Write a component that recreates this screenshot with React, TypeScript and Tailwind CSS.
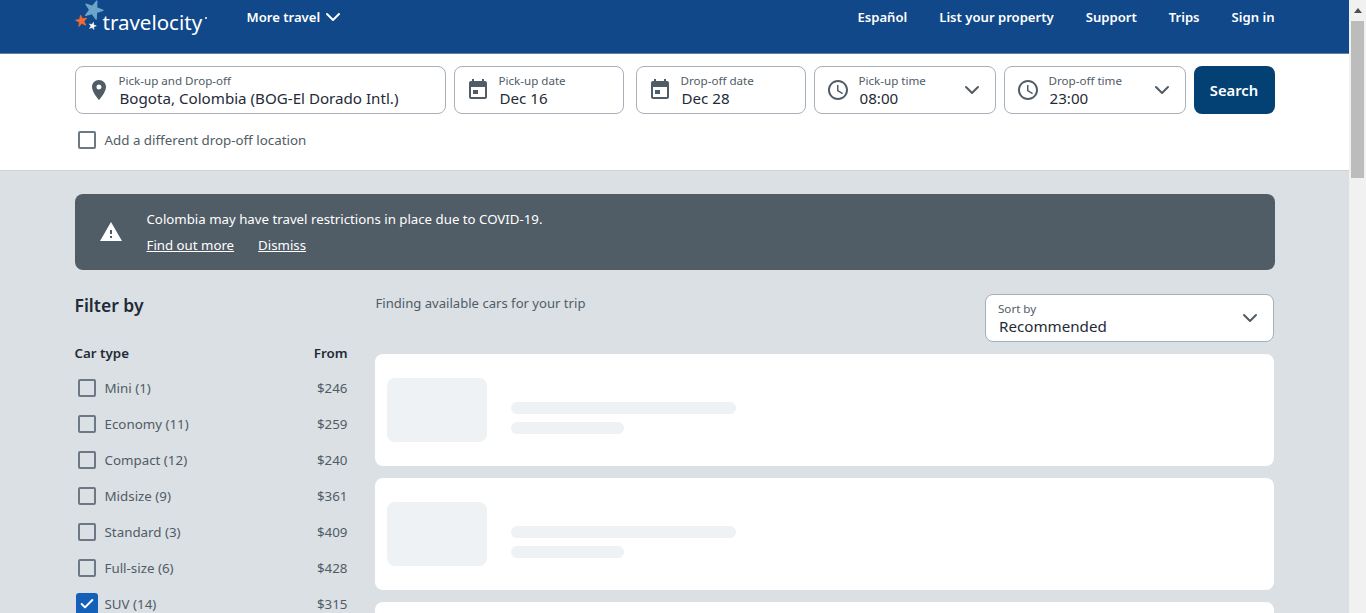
import { ChevronDown, Check } from 'lucide-react';

const filters = [
  { label: 'Mini (1)', price: '$246' },
  { label: 'Economy (11)', price: '$259' },
  { label: 'Compact (12)', price: '$240' },
  { label: 'Midsize (9)', price: '$361' },
  { label: 'Standard (3)', price: '$409' },
  { label: 'Full-size (6)', price: '$428' },
  { label: 'SUV (14)', price: '$315', checked: true },
];

function Star({ cx, cy, r, fill, rot }: { cx: number; cy: number; r: number; fill: string; rot: number }) {
  const pts = Array.from({ length: 10 }, (_, i) => {
    const rad = i % 2 === 0 ? r : r * 0.4;
    const a = ((rot + i * 36) * Math.PI) / 180;
    return `${cx + rad * Math.sin(a)},${cy - rad * Math.cos(a)}`;
  }).join(' ');
  return <polygon points={pts} fill={fill} stroke={fill} strokeWidth={r * 0.14} strokeLinejoin="round" />;
}

function Logo() {
  return (
    <div className="relative h-[34px] w-[134px]">
      <svg width="32" height="34" viewBox="0 0 32 34" className="absolute left-0 top-0">
        <Star cx={18.5} cy={10} r={9.5} fill="#6ba5cb" rot={20} />
        <Star cx={6.5} cy={21} r={6} fill="#f26b32" rot={-10} />
        <Star cx={17.5} cy={26} r={3.8} fill="#ffffff" rot={15} />
      </svg>
      <span className="absolute left-[28px] top-[7px] text-[20.5px] font-normal leading-[30px] text-white">
        travelocity
      </span>
      <span className="absolute left-[130px] top-[17px] h-[2px] w-[2px] rounded-full bg-white" />
    </div>
  );
}

function Pin() {
  return (
    <svg width="24" height="24" viewBox="0 0 24 24" fill="#505c66" className="-mr-px">
      <path d="M12 2C8.13 2 5 5.13 5 9c0 5.25 7 13 7 13s7-7.75 7-13c0-3.87-3.13-7-7-7zm0 9.5a2.5 2.5 0 1 1 0-5 2.5 2.5 0 0 1 0 5z" />
    </svg>
  );
}

function CalendarIcon() {
  return (
    <svg width="24" height="24" viewBox="0 0 24 24" fill="#505c66">
      <path d="M19 3h-1V1h-2v2H8V1H6v2H5c-1.1 0-2 .9-2 2v14c0 1.1.9 2 2 2h14c1.1 0 2-.9 2-2V5c0-1.1-.9-2-2-2zm0 16H5V9h14v10zM7 12h5v4H7z" />
    </svg>
  );
}

function ClockIcon() {
  return (
    <svg width="24" height="24" viewBox="0 0 24 24" fill="#505c66">
      <path d="M11.99 2C6.47 2 2 6.48 2 12s4.47 10 9.99 10C17.52 22 22 17.52 22 12S17.52 2 11.99 2zM12 20c-4.42 0-8-3.58-8-8s3.58-8 8-8 8 3.58 8 8-3.58 8-8 8zm.5-13H11v6l5.25 3.15.75-1.23-4.5-2.67V7z" />
    </svg>
  );
}

function SearchField({ label, value, icon, width, chevron }: { label: string; value: string; icon: React.ReactNode; width: string; chevron?: boolean }) {
  return (
    <div className={`flex h-12 items-center rounded-lg border border-[#a7afb8] bg-white pl-[11px] pr-[11px] ${width}`}>
      <div className="shrink-0">{icon}</div>
      <div className="ml-[9px] min-w-0 flex-1 pt-px">
        <p className="text-[11.6px] leading-[15px] text-[#505c66]">{label}</p>
        <p className="whitespace-nowrap pl-px text-[15.15px] leading-[20px] text-[#1f2b37]">{value}</p>
      </div>
      {chevron && <ChevronDown size={24} strokeWidth={2} className="shrink-0 text-[#505c66]" />}
    </div>
  );
}

function Box({ checked }: { checked?: boolean }) {
  if (checked) {
    return (
      <span className="flex h-[22px] w-[22px] items-center justify-center rounded-[3px] bg-[#1460b8]">
        <Check size={16} strokeWidth={3} className="text-white" />
      </span>
    );
  }
  return <span className="block h-[18px] w-[18px] rounded-[2px] border-2 border-[#6c7884]" />;
}

function LoadingCard() {
  return (
    <div className="flex h-28 shrink-0 items-center rounded-lg bg-white pl-3">
      <div className="h-16 w-[100px] rounded-lg bg-[#eff2f5]" />
      <div className="ml-6 pt-4">
        <div className="h-3 w-[225px] rounded-md bg-[#eff2f5]" />
        <div className="mt-2 h-3 w-[113px] rounded-md bg-[#eff2f5]" />
      </div>
    </div>
  );
}

export default function App() {
  return (
    <div className="flex h-[613px] overflow-hidden bg-[#dbe0e4] font-['Noto_Sans',sans-serif]">
      <div className="min-w-0 flex-1">
        <header className="h-[54px] border-b border-[#5f7ea8] bg-[#114889]">
          <div className="mx-auto flex w-[1200px] text-[13.1px] font-semibold text-white">
            <Logo />
            <div className="ml-[38px] flex h-[36px] items-center">
              More travel <ChevronDown size={24} strokeWidth={2} className="ml-[1px] -translate-y-px" />
            </div>
            <nav className="ml-auto flex h-[36px] items-center gap-[32px]">
              <span>Español</span>
              <span>List your property</span>
              <span>Support</span>
              <span>Trips</span>
              <span>Sign in</span>
            </nav>
          </div>
        </header>

        <section className="h-[117px] border-b border-[#cdd2d7] bg-white pt-3">
          <div className="mx-auto w-[1200px]">
            <div className="flex">
              <SearchField label="Pick-up and Drop-off" value="Bogota, Colombia (BOG-El Dorado Intl.)" icon={<Pin />} width="w-[371px]" />
              <div className="ml-2"><SearchField label="Pick-up date" value="Dec 16" icon={<CalendarIcon />} width="w-[170px]" /></div>
              <div className="ml-3"><SearchField label="Drop-off date" value="Dec 28" icon={<CalendarIcon />} width="w-[170px]" /></div>
              <div className="ml-2"><SearchField label="Pick-up time" value="08:00" icon={<ClockIcon />} width="w-[182px]" chevron /></div>
              <div className="ml-2"><SearchField label="Drop-off time" value="23:00" icon={<ClockIcon />} width="w-[182px]" chevron /></div>
              <button className="ml-2 h-12 w-[81px] rounded-lg bg-[#034073] text-[14.8px] font-semibold text-white">Search</button>
            </div>
            <label className="mt-4 flex h-[20px] items-center pl-[3px] text-[13.35px] text-[#505c66]">
              <Box />
              <span className="ml-[9px]">Add a different drop-off location</span>
            </label>
          </div>
        </section>

        <main className="mx-auto w-[1200px] pt-[23px]">
          <div className="flex h-[76px] items-center rounded-lg bg-[#505c66] text-[13.25px] text-white">
            <svg width="24" height="24" viewBox="0 0 24 24" fill="#fff" className="ml-6 shrink-0">
              <path d="M1 21h22L12 2 1 21zm12-3h-2v-2h2v2zm0-4h-2v-4h2v4z" />
            </svg>
            <div className="ml-[24px]">
              <p className="leading-5">Colombia may have travel restrictions in place due to COVID-19.</p>
              <div className="mt-[6px] flex gap-6 leading-5">
                <a className="underline">Find out more</a>
                <a className="underline">Dismiss</a>
              </div>
            </div>
          </div>

          <div className="mt-6 flex">
            <aside className="w-[273px] shrink-0">
              <h2 className="text-[17.5px] font-semibold leading-[22px] text-[#1f2b37]">Filter by</h2>
              <div className="mt-[27px] flex justify-between text-[13.35px] font-semibold leading-5 text-[#1f2b37]">
                <span>Car type</span>
                <span>From</span>
              </div>
              <ul className="mt-[7px]">
                {filters.map((f) => (
                  <li key={f.label} className="flex h-9 items-center text-[13.35px] text-[#505c66]">
                    <span className="flex w-[30px] justify-center pr-[6px]"><Box checked={f.checked} /></span>
                    <span>{f.label}</span>
                    <span className="ml-auto">{f.price}</span>
                  </li>
                ))}
              </ul>
            </aside>

            <div className="ml-[27px] w-[899px] shrink-0">
              <div className="flex h-12 items-start justify-between">
                <p className="ml-px mt-[-1px] text-[13.1px] leading-5 text-[#505c66]">Finding available cars for your trip</p>
                <div className="flex h-12 w-[288.5px] items-center rounded-lg border border-[#a7afb8] bg-white pl-3 pr-[11px]">
                  <div className="flex-1 pt-px">
                    <p className="text-[11.6px] leading-[15px] text-[#505c66]">Sort by</p>
                    <p className="pl-px text-[15.15px] leading-[20px] text-[#1f2b37]">Recommended</p>
                  </div>
                  <ChevronDown size={24} strokeWidth={2} className="text-[#505c66]" />
                </div>
              </div>
              <div className="mt-3 flex flex-col gap-3">
                <LoadingCard />
                <LoadingCard />
                <LoadingCard />
              </div>
            </div>
          </div>
        </main>
      </div>

      <div className="flex w-[17px] shrink-0 flex-col bg-[#f1f1f1]">
        <div className="flex h-[21px] items-center justify-center">
          <span className="h-0 w-0 border-x-[4px] border-b-[5px] border-x-transparent border-b-[#505050]" />
        </div>
        <div className="mx-[2px] h-[157px] bg-[#bcbcbc]" />
      </div>
    </div>
  );
}
